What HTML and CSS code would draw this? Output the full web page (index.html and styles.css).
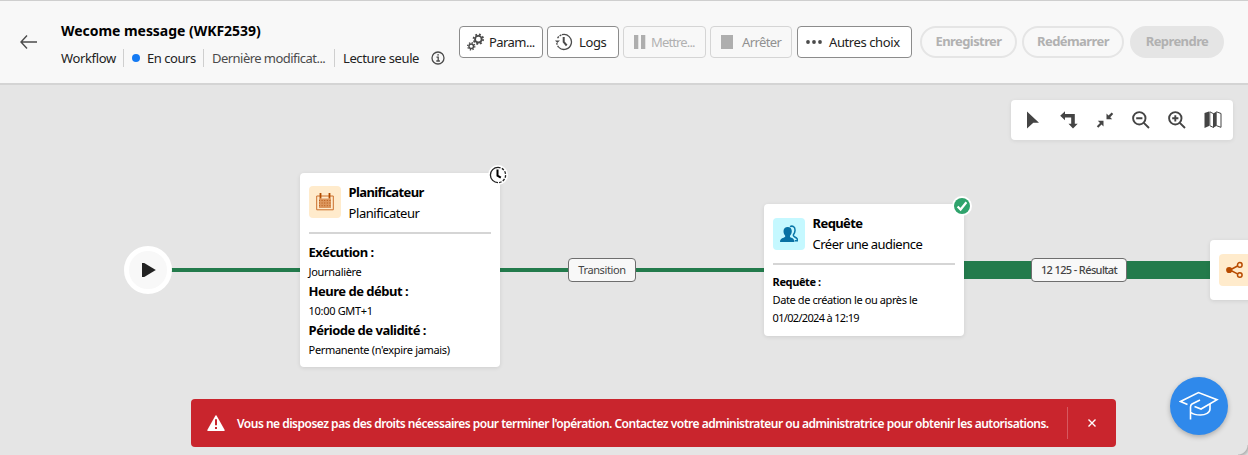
FILE: index.html
```html
<!DOCTYPE html>
<html lang="fr">
<head>
<meta charset="utf-8">
<title>Workflow</title>
<link rel="stylesheet" href="styles.css">
</head>
<body>
<header class="header">
  <svg class="back" width="18" height="16" viewBox="0 0 18 16" fill="none" stroke="#4b4b4b" stroke-width="1.4"><path d="M17 8H1.5M7 1.5L1 8l6 6.500"/></svg>
  <div class="heading">
    <h1 class="title">Wecome message (WKF2539)</h1>
    <div class="meta">
      <span class="meta-item kind">Workflow</span>
      <span class="meta-item status"><i class="dot"></i>En cours</span>
      <span class="meta-item modified">Dernière modificat...</span>
      <span class="meta-item readonly">Lecture seule</span>
      <svg width="14" height="14" viewBox="0 0 14 14" fill="none" stroke="#4b4b4b" stroke-width="1.3"><circle cx="7" cy="7" r="6"/><path d="M5.5 6.2H7.2V10M5.3 10h3.6M6.3 3.8h1.6"/></svg>
    </div>
  </div>
  <div class="actions">
    <button class="btn settings"><svg width="19" height="20" viewBox="0 0 20 20" fill="none" stroke="#4b4b4b"><circle cx="13" cy="7" r="3.500" stroke-width="2"/><circle cx="13" cy="7" r="5" stroke-width="2" stroke-dasharray="2 1.927"/><circle cx="5.500" cy="14.500" r="2.400" stroke-width="1.500"/><circle cx="5.500" cy="14.500" r="3.700" stroke-width="1.500" stroke-dasharray="1.400 1.506"/></svg><span>Param...</span></button>
    <button class="btn logs"><svg width="18" height="18" viewBox="0 0 18 18" fill="none" stroke="#4b4b4b"><path d="M7 1.700A7.500 7.500 0 1 1 3.800 14.400" stroke-width="1.300"/><path d="M3.800 14.400A7.500 7.500 0 0 1 1.800 10M2.600 5.200A7.500 7.500 0 0 1 7 1.700" stroke-width="1.300" stroke-dasharray="2 1"/><path d="M0 7.500h5L2.300 10z" fill="#4b4b4b" stroke="none"/><path d="M8.700 4v5l3 3.500" stroke-width="2"/></svg><span>Logs</span></button>
    <button class="btn off pause"><svg width="12" height="14" viewBox="0 0 12 14" fill="#aeaeae"><path d="M0 0h4.300v14H0zM7 0h4.300v14H7z"/></svg><span>Mettre...</span></button>
    <button class="btn off stop"><svg width="12" height="14" viewBox="0 0 12 14" fill="#aeaeae"><path d="M0 0h12v14H0z"/></svg><span>Arrêter</span></button>
    <button class="btn more"><svg width="16" height="4" viewBox="0 0 16 4" fill="#4b4b4b"><circle cx="2" cy="2" r="1.900"/><circle cx="8" cy="2" r="1.900"/><circle cx="14" cy="2" r="1.900"/></svg><span>Autres choix</span></button>
    <button class="pill save">Enregistrer</button>
    <button class="pill restart">Redémarrer</button>
    <button class="pill filled">Reprendre</button>
  </div>
</header>

<main class="canvas">
  <div class="link first"></div>
  <div class="link second"></div>
  <div class="link result"></div>

  <div class="start"><svg width="14" height="14" viewBox="0 0 14 14"><path d="M0 0h2.200L13.800 7 2.200 14H0z" fill="#222"/></svg></div>

  <section class="card scheduler">
    <div class="card-head">
      <span class="tile orange"><svg width="18" height="18" viewBox="0 0 18 18" fill="none"><path d="M.7 3h16.600v13.800H.7z" stroke="#cb6f2b"/><path d="M3 5.500h12v9.500H3z" fill="#dc965d"/><path d="M3 7.500h12M3 10h12M3 12.700h12" stroke="#b75a19" stroke-dasharray="1 1.600"/><path d="M4.500 0v5.500M13.500 0v5.500" stroke="#b14c00" stroke-width="1.800"/></svg></span>
      <div><h2>Planificateur</h2><p class="sub s1">Planificateur</p></div>
    </div>
    <hr>
    <dl class="details">
      <dt>Exécution :</dt><dd>Journalière</dd>
      <dt>Heure de début :</dt><dd>10:00 GMT+1</dd>
      <dt>Période de validité :</dt><dd>Permanente (n'expire jamais)</dd>
    </dl>
    <svg class="badge" width="20" height="20" viewBox="0 0 20 20" fill="none"><circle cx="10" cy="10" r="10" fill="#fff"/><path d="M10 2.400A7.600 7.600 0 0 0 10 17.600" stroke="#222" stroke-width="1.300"/><path d="M10 2.400A7.600 7.600 0 0 1 10 17.600" stroke="#222" stroke-width="1.300" stroke-dasharray="2.600 1.400"/><path d="M9.500 4.500v6.200l3.300 2" stroke="#000" stroke-width="2"/></svg>
  </section>

  <span class="label transition">Transition</span>

  <section class="card query">
    <div class="card-head">
      <span class="tile cyan"><svg width="18" height="18" viewBox="0 0 18 18"><path d="M10 1.700c2.500-1.500 5.300.2 5 3.900-.1 2-.8 3.200-1.600 4.200-.3 1.200.2 1.700 1.400 2.200 1.800.8 2.900 1.600 3 3.700h-3" fill="none" stroke="#0a78aa" stroke-width="1.500"/><path d="M7.800 2c2.400 0 4 1.600 4 4.100 0 2-.7 3.600-1.800 4.700-.3 1.300.2 1.600 1.400 2 2 .7 3 1.800 3 4.200H0c0-2.700 1.300-3.600 3.600-4.300 1.200-.4 1.800-.7 1.600-1.900C4.200 9.700 3.500 8 3.500 6.100 3.500 3.600 5.300 2 7.800 2z" fill="#0871a3"/></svg></span>
      <div><h2 class="h-query">Requête</h2><p class="sub s2">Créer une audience</p></div>
    </div>
    <hr>
    <div class="rule"><strong>Requête :</strong><span class="r1">Date de création le ou après le</span><span class="r2">01/02/2024 à 12:19</span></div>
    <svg class="badge" width="20" height="20" viewBox="0 0 20 20" fill="none"><circle cx="10" cy="10" r="10" fill="#fff"/><circle cx="10" cy="10" r="8" fill="#2fa36c"/><path d="M5.600 10.400l3 3.100L14.400 6.200" stroke="#fff" stroke-width="2.200"/></svg>
  </section>

  <span class="label output">12 125 - Résultat</span>

  <section class="card fork"><span class="tile orange"><svg width="18" height="18" viewBox="0 0 18 18" fill="none" stroke="#b84b00" stroke-width="1.500"><path d="M4 9l7.500-4M4 9l7.500 3.800"/><circle cx="3.200" cy="9" r="3.100" fill="#b84b00" stroke="none"/><circle cx="13.800" cy="3.900" r="2.300"/><circle cx="13.800" cy="14" r="2.300"/></svg></span></section>

  <nav class="tools">
    <svg width="18" height="18" viewBox="0 0 18 18"><path d="M3 .5l12 11.200H9.300L3 17.500z" fill="#444"/></svg>
    <svg width="18" height="18" viewBox="0 0 18 18" fill="none"><path d="M4.500 4.700H13v8.500" stroke="#444" stroke-width="3.600"/><path d="M5 .2v9L.2 4.700zM8.500 12.700h9.200L13 17.600z" fill="#444"/></svg>
    <svg width="18" height="18" viewBox="0 0 18 18"><path d="M10.500 2.500v5.700h5.700l-2-2 3-3.300-1.500-1.500-3.200 3zM1.800 9.800h5.700v5.700l-2-2-3.200 3.200-1.500-1.500 3.200-3.200z" fill="#444"/></svg>
    <svg width="18" height="18" viewBox="0 0 18 18" fill="none" stroke="#444" stroke-width="1.900"><circle cx="7.300" cy="7.300" r="6.200"/><path d="M11.800 11.800l5.200 5.200M4.200 7.300h6.200"/></svg>
    <svg width="18" height="18" viewBox="0 0 18 18" fill="none" stroke="#444" stroke-width="1.900"><circle cx="7.300" cy="7.300" r="6.200"/><path d="M11.800 11.800l5.200 5.200M4.200 7.300h6.200M7.300 4.200v6.200"/></svg>
    <svg width="18" height="18" viewBox="0 0 18 18"><path d="M.5 2L5 .5V15L.5 17z" fill="#444"/><path d="M5.800.8l3.700 1.900v13.800l-3.700-1.800zM12.500.8l4.500 1.700v13.800l-4.500-1.600" fill="none" stroke="#444"/><path d="M9.200 2.500l3.500-2v14.200l-3.500 2z" fill="#444"/></svg>
  </nav>

  <div class="toast">
    <svg width="18" height="16" viewBox="0 0 18 16"><path d="M8.300.7q.7-1 1.400 0L17.700 15q.2 1-.7 1H1q-.9 0-.7-1z" fill="#fff"/><path d="M8 4.200h2v6H8zM8 12h2v2.100H8z" fill="#c9252d"/></svg>
    <span class="message">Vous ne disposez pas des droits nécessaires pour terminer l'opération. Contactez votre administrateur ou administratrice pour obtenir les autorisations.</span>
    <span class="close"><svg width="8" height="8" viewBox="0 0 8 8" stroke="#fff" stroke-width="1.400"><path d="M.5.5l7 7M7.500.5l-7 7"/></svg></span>
  </div>

  <div class="learn"><svg width="40" height="32" viewBox="0 0 40 32" fill="none" stroke="#fff" stroke-width="1.600"><path d="M8.500 14.500L1.500 11.500 19.500 2.500l18.500 7.200L22 19l-6.500-2.500"/><path d="M21 10l-8 4q-1.500 1-1.500 3v12.500M31 14V19c0 3.500-4.500 6-9.500 6-4 0-7.500-.8-9.500-2.500"/></svg></div>
  <i class="corner"></i>
</main>
</body>
</html>
```
FILE: styles.css
```css
* { box-sizing: border-box; }
body { margin: 0; width: 1248px; height: 455px; overflow: hidden; background: #e5e5e5; color: #000; font-family: "Noto Sans", sans-serif; font-size: 13px; }
h1, h2, p, dl, dd { margin: 0; }
svg { flex: none; display: block; }

.header { display: flex; height: 85px; padding-left: 20px; background: #f8f8f8; border-top: 1px solid #cfcfcf; border-bottom: 2px solid #d4d4d4; }
.back { margin-top: 33px; }
.heading { width: 421px; padding: 20px 0 0 23px; flex: none; }
.title { font-size: 14px; line-height: 20px; font-weight: 700; letter-spacing: -.04px; white-space: nowrap; }
.meta { display: flex; align-items: center; height: 18px; margin-top: 8px; color: #222; white-space: nowrap; letter-spacing: -.35px; }
.meta-item { height: 18px; line-height: 18px; flex: none; }
.kind { width: 63px; border-right: 1px solid #cfcfcf; }
.status { display: flex; align-items: center; width: 80px; padding-left: 8px; border-right: 1px solid #cfcfcf; letter-spacing: -.45px; }
.dot { width: 8px; height: 8px; margin-right: 7px; border-radius: 50%; background: #147af3; }
.modified { width: 131px; padding-left: 8px; border-right: 1px solid #cfcfcf; color: #4b4b4b; letter-spacing: -.54px; }
.readonly { width: 96px; padding-left: 8px; letter-spacing: -.4px; }

.actions { display: flex; padding-top: 25px; }
.btn, .pill { display: flex; align-items: center; height: 32px; padding: 0; flex: none; font-family: inherit; white-space: nowrap; }
.btn { margin-right: 4px; border: 1px solid #8c8c8c; border-radius: 4px; background: #fff; color: #222; font-size: 13px; letter-spacing: -.4px; }
.btn.off { background: #f8f8f8; border-color: #d5d5d5; color: #b1b1b1; }
.settings { width: 84px; padding-left: 6px; gap: 4px; letter-spacing: -.55px; }
.logs { width: 72px; padding-left: 7px; gap: 6px; }
.btn.pause { width: 83px; padding-left: 10px; gap: 5px; letter-spacing: -.85px; }
.btn.stop { width: 82px; padding-left: 10px; gap: 9px; margin-right: 5px; color: #919191; letter-spacing: -.6px; }
.more { width: 115px; padding-left: 8px; gap: 7px; }
.pill { justify-content: center; margin: 0 6px 0 0; padding-bottom: 2px; border: 2px solid #e5e5e5; border-radius: 16px; background: #f8f8f8; color: #b1b1b1; font-size: 13px; font-weight: 700; letter-spacing: -.58px; }
.save { width: 97px; margin-left: 4px; margin-right: 5px; }
.restart { width: 102px; }
.pill.filled { width: 94px; background: #e5e5e5; }

.canvas { position: relative; height: 370px; overflow: hidden; }
.link { position: absolute; top: 183px; height: 4px; background: #237b4c; }
.first { left: 170px; width: 131px; }
.second { left: 499px; width: 266px; }
.result { left: 963px; top: 176px; width: 248px; height: 18px; }
.start { position: absolute; left: 124px; top: 161px; display: flex; align-items: center; justify-content: center; width: 48px; height: 48px; padding-left: 2px; border: 5px solid #fff; border-radius: 50%; background: #f8f8f8; }

.card { position: absolute; width: 200px; padding: 0 9px; border-radius: 4px; background: #fff; box-shadow: 0 1px 4px rgba(0, 0, 0, .1); white-space: nowrap; }
.scheduler { left: 299.6px; top: 87.6px; height: 194.5px; padding-top: 9.400px; }
.query { left: 763.6px; top: 119px; height: 132px; padding-top: 9px; }
.fork { left: 1209.6px; top: 155px; height: 60px; padding-top: 14px; }
.card-head { display: flex; gap: 8px; height: 43px; }
.tile { display: flex; align-items: center; justify-content: center; width: 32px; height: 32px; margin-top: 4.500px; border-radius: 4px; }
.query .tile { margin-top: 5px; }
.fork .tile { margin-top: 0; }
.orange { background: #ffebcc; }
.cyan { background: #c5f8ff; }
.card h2 { font-size: 13px; line-height: 20px; letter-spacing: -.62px; font-weight: 700; }
.sub { line-height: 22px; font-size: 13px; letter-spacing: -.45px; }
.s2 { letter-spacing: -.53px; }
.card hr { height: 2px; margin: 7px 0 0; border: 0; background: #d5d5d5; }
.details { padding-top: 8px; }
.details dt { font-size: 13px; line-height: 21px; font-weight: 700; letter-spacing: -.5px; }
.details dd { font-size: 11px; line-height: 18px; letter-spacing: -.32px; }
.rule { display: flex; flex-direction: column; padding-top: 8px; font-size: 11px; line-height: 18px; letter-spacing: -.4px; }
.r2 { letter-spacing: -.68px; }
.badge { position: absolute; right: -8px; top: -8px; }

.label { position: absolute; display: flex; align-items: center; justify-content: center; height: 24px; padding-bottom: 2px; border: 1px solid #6e6e6e; border-radius: 4px; background: #f8f8f8; color: #444; font-size: 11px; white-space: nowrap; }
.transition { left: 568px; top: 173px; width: 68px; letter-spacing: -.38px; }
.output { left: 1031px; top: 173px; width: 96px; font-weight: 500; letter-spacing: -.62px; }

.tools { position: absolute; left: 1011px; top: 15px; display: flex; align-items: center; gap: 18px; width: 222px; height: 40px; padding-left: 12.800px; border-radius: 4px; background: #fff; box-shadow: 0 1px 4px rgba(0, 0, 0, .08); }
.toast { position: absolute; left: 191px; top: 314px; display: flex; align-items: center; width: 925px; height: 48px; padding-left: 16px; border-radius: 4px; background: #c9252d; color: #fff; }
.message { width: 830px; margin-left: 12px; font-size: 12px; font-weight: 600; letter-spacing: -.505px; white-space: nowrap; flex: none; }
.close { display: flex; align-items: center; height: 32px; padding-left: 20px; border-left: 1px solid #d75960; }
.learn { position: absolute; left: 1170px; top: 292px; display: flex; align-items: center; justify-content: center; width: 58px; height: 58px; border-radius: 50%; background: #2f89eb; box-shadow: 0 2px 5px rgba(0, 0, 0, .25); }
.corner { position: absolute; right: 0; bottom: 0; width: 10px; height: 10px; background: radial-gradient(circle at 0 0, transparent 9px, #b4b4b4 10px, #dcdcdc 13px); }
```
